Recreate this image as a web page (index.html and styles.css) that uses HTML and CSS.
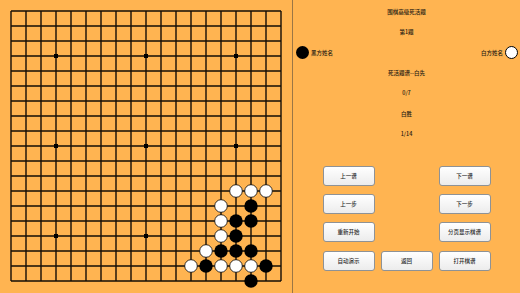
FILE: index.html
```html
<!DOCTYPE html>
<html lang="zh-CN">
<head>
    <meta charset="UTF-8">
    <meta name="viewport" content="width=device-width, initial-scale=1.0">
    <title>围棋高级死活题</title>
    <link rel="stylesheet" href="styles.css">
</head>
<body>
    <div class="screen">
        <div class="board">
            <svg width="292" height="293" viewBox="0 0 292 293">
                <path class="grid" d="M11 11H281M11 26H281M11 41H281M11 56H281M11 71H281M11 86H281M11 101H281M11 116H281M11 131H281M11 146H281M11 161H281M11 176H281M11 191H281M11 206H281M11 221H281M11 236H281M11 251H281M11 266H281M11 281H281
                    M11 11V281M26 11V281M41 11V281M56 11V281M71 11V281M86 11V281M101 11V281M116 11V281M131 11V281M146 11V281M161 11V281M176 11V281M191 11V281M206 11V281M221 11V281M236 11V281M251 11V281M266 11V281M281 11V281"/>
                <!-- star points -->
                <g class="star">
                    <rect x="54" y="54" width="4" height="4"/>
                    <rect x="144" y="54" width="4" height="4"/>
                    <rect x="234" y="54" width="4" height="4"/>
                    <rect x="54" y="144" width="4" height="4"/>
                    <rect x="144" y="144" width="4" height="4"/>
                    <rect x="234" y="144" width="4" height="4"/>
                    <rect x="54" y="234" width="4" height="4"/>
                    <rect x="144" y="234" width="4" height="4"/>
                    <rect x="234" y="234" width="4" height="4"/>
                </g>
                <!-- black stones -->
                <g class="black">
                    <circle cx="251" cy="206" r="6.7"/>
                    <circle cx="236" cy="221" r="6.7"/>
                    <circle cx="251" cy="221" r="6.7"/>
                    <circle cx="236" cy="236" r="6.7"/>
                    <circle cx="221" cy="251" r="6.7"/>
                    <circle cx="236" cy="251" r="6.7"/>
                    <circle cx="251" cy="251" r="6.7"/>
                    <circle cx="206" cy="266" r="6.7"/>
                    <circle cx="266" cy="266" r="6.7"/>
                    <circle cx="251" cy="281" r="6.7"/>
                </g>
                <!-- white stones -->
                <g class="white">
                    <circle cx="236" cy="191" r="6.3"/>
                    <circle cx="251" cy="191" r="6.3"/>
                    <circle cx="266" cy="191" r="6.3"/>
                    <circle cx="221" cy="206" r="6.3"/>
                    <circle cx="221" cy="221" r="6.3"/>
                    <circle cx="221" cy="236" r="6.3"/>
                    <circle cx="206" cy="251" r="6.3"/>
                    <circle cx="191" cy="266" r="6.3"/>
                    <circle cx="221" cy="266" r="6.3"/>
                    <circle cx="236" cy="266" r="6.3"/>
                    <circle cx="251" cy="266" r="6.3"/>
                </g>
            </svg>
        </div>

        <div class="panel">
            <div class="row">围棋高级死活题</div>
            <div class="row">第1题</div>
            <div class="row players">
                <div class="player">
                    <span class="stone stone-black"></span>
                    <span>黑方姓名</span>
                </div>
                <div class="player">
                    <span>白方姓名</span>
                    <span class="stone stone-white"></span>
                </div>
            </div>
            <div class="row">死活题谱--白先</div>
            <div class="row">0/7</div>
            <div class="row">白胜</div>
            <div class="row">1/14</div>

            <div class="buttons">
                <button type="button" class="btn">上一谱</button>
                <span></span>
                <button type="button" class="btn">下一谱</button>

                <button type="button" class="btn">上一步</button>
                <span></span>
                <button type="button" class="btn">下一步</button>

                <button type="button" class="btn">重新开始</button>
                <span></span>
                <button type="button" class="btn">分页显示棋谱</button>

                <button type="button" class="btn">自动演示</button>
                <button type="button" class="btn">返回</button>
                <button type="button" class="btn">打开棋谱</button>
            </div>
        </div>
    </div>
</body>
</html>
```

FILE: styles.css
```css
body {
    margin: 0;
    font-family: "Noto Sans CJK SC", "Noto Sans", sans-serif;
    background-color: #ffb451;
}

.screen {
    display: flex;
    width: 520px;
    height: 293px;
    overflow: hidden;
    background-color: #ffb451;
}

.board {
    width: 292px;
    height: 293px;
    flex: none;
}

.board svg {
    display: block;
}

.grid {
    fill: none;
    stroke: #140e06;
    stroke-width: 1.4;
}

.star rect {
    fill: #000;
}

.black circle {
    fill: #000;
}

.white circle {
    fill: #fff;
    stroke: #000;
    stroke-width: 0.8;
}

.panel {
    flex: 1;
    border-left: 1px solid #9b7645;
    padding-top: 2px;
    color: #1e1a12;
    font-size: 5.5px;
    font-weight: 500;
}

.row {
    height: 20.33px;
    line-height: 20.33px;
    text-align: center;
}

.players {
    display: flex;
    justify-content: space-between;
    align-items: center;
    padding: 0 2px 0 3px;
}

.player {
    display: flex;
    align-items: center;
    gap: 2px;
}

.stone {
    display: block;
    width: 13px;
    height: 13px;
    border-radius: 50%;
    box-sizing: border-box;
}

.stone-black {
    background-color: #000;
}

.stone-white {
    background-color: #fff;
    border: 1px solid #000;
}

.buttons {
    display: grid;
    grid-template-columns: repeat(3, 52px);
    grid-auto-rows: 20px;
    column-gap: 6px;
    row-gap: 8.2px;
    justify-content: center;
    margin-top: 21.7px;
}

.btn {
    margin: 0;
    padding: 0;
    font-family: "Noto Sans CJK SC", "Noto Sans", sans-serif;
    font-size: 5.5px;
    font-weight: 500;
    color: #2a2a2a;
    background: linear-gradient(#ffffff, #ececec);
    border: 1px solid #8e9296;
    border-radius: 3px;
}
```
